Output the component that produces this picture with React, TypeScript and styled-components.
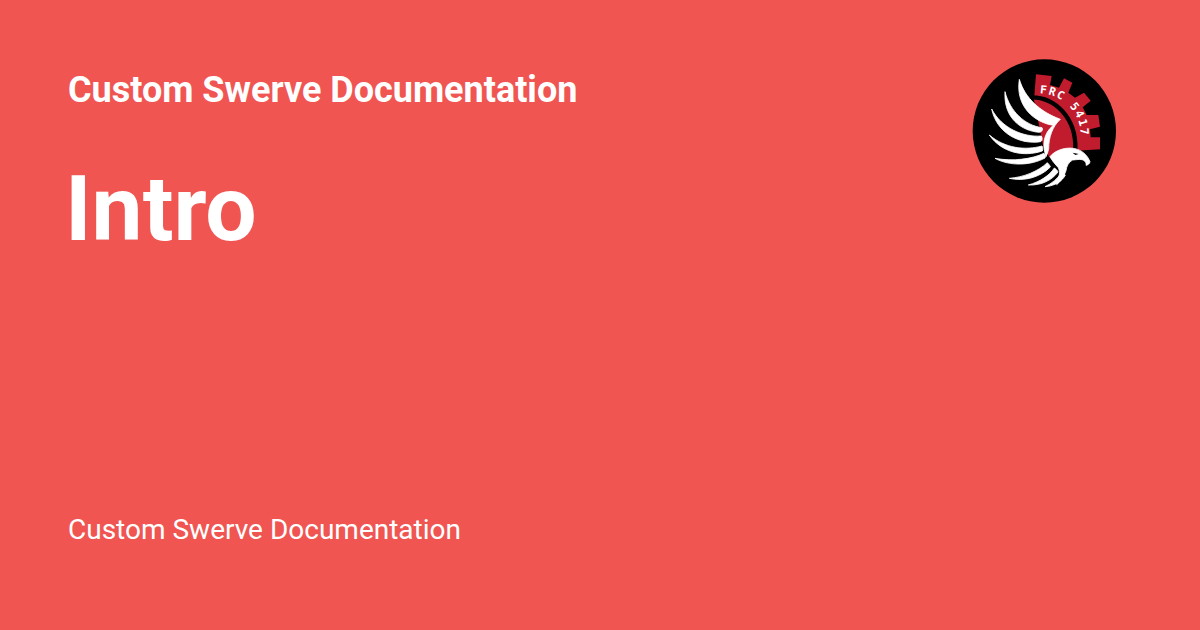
import React from 'react'
import styled, { createGlobalStyle } from 'styled-components'

const GlobalStyle = createGlobalStyle`
  html, body {
    margin: 0;
    padding: 0;
  }
`

const gear =
  'M228 73 L275 78 L270 105 L297 113 L312 85 L337 98 L325 128 L345 143 L372 128 L392 152 L368 172 L380 195 L415 195 L420 230 L390 238 L392 262 L420 262 L420 298 L350 302 L270 325 L250 290 L222 150 Z'

const feathers = [
  'M178 88 C195 145 240 185 301 208 C278 228 266 262 266 296 C264 305 262 312 258 320 C246 285 250 250 280 226 C225 218 165 170 178 88 Z',
  'M135 125 C150 185 195 226 246 233 C250 238 246 246 238 247 C185 243 130 205 135 125 Z',
  'M95 177 C125 235 190 262 244 258 C248 264 247 272 242 275 C180 285 110 250 95 177 Z',
  'M88 255 C135 295 195 302 246 288 C249 293 249 299 247 303 C190 322 125 308 88 255 Z',
  'M105 325 C160 335 215 327 252 310 C256 314 257 319 255 324 C215 346 150 350 105 325 Z',
  'M148 385 C190 382 235 364 262 338 C266 342 270 346 271 351 C240 383 190 395 148 385 Z',
  'M205 405 C240 395 268 377 283 354 C288 357 292 361 294 366 C276 390 245 407 205 405 Z',
  'M255 410 C276 400 292 387 304 368 L316 375 C308 392 286 408 255 410 Z',
]

const head =
  'M270 320 C285 300 320 290 345 296 C365 300 382 315 390 335 C389 342 383 345 378 346 C380 338 374 331 366 329 C355 327 345 330 338 330 C326 336 320 348 318 362 C312 380 302 394 290 404 C298 380 302 364 294 352 C286 343 276 332 270 320 Z'

const Logo = () => (
  <LogoSvg viewBox="36 27 432 432" aria-label="FRC 5417">
    <circle cx="253" cy="243" r="215" fill="#000" />
    <path d={gear} fill="#c01c2e" />
    <path d="M212 142 C285 140 350 205 346 300" fill="none" stroke="#000" strokeWidth="13" />
    <path id="gearText" d="M 239 130 A 125 125 0 0 1 362 262" fill="none" />
    <GearLabel textLength="195" lengthAdjust="spacing">
      <textPath href="#gearText">FRC 5417</textPath>
    </GearLabel>
    <g fill="#fff" stroke="#fff" strokeWidth="2.5" strokeLinejoin="round">
      {feathers.map(d => (
        <path key={d} d={d} />
      ))}
      <path d={head} />
    </g>
    <path d="M338 308 L356 312 L346 315 Z" fill="#000" />
  </LogoSvg>
)

const App = (): JSX.Element => (
  <>
    <GlobalStyle />
    <Card>
      <Header>
        <Headings>
          <Site>Custom Swerve Documentation</Site>
          <Title>Intro</Title>
        </Headings>
        <Logo />
      </Header>
      <Footer>Custom Swerve Documentation</Footer>
    </Card>
  </>
)

const Card = styled.div`
  box-sizing: border-box;
  width: 1200px;
  height: 630px;
  padding: 60px 84px 0 68px;
  display: flex;
  flex-direction: column;
  justify-content: space-between;
  background: #f05552;
  color: #fff;
  font-family: Roboto, 'Liberation Sans', sans-serif;
  overflow: hidden;
`

const Header = styled.div`
  display: flex;
  justify-content: space-between;
  align-items: flex-start;
`

const Headings = styled.div`
  display: flex;
  flex-direction: column;
  gap: 39px;
`

const Site = styled.div`
  font-size: 36px;
  font-weight: 700;
  line-height: 60px;
`

const Title = styled.div`
  font-size: 91px;
  font-weight: 700;
  line-height: 100px;
  margin-left: -3px;
`

const Footer = styled.div`
  font-size: 28px;
  line-height: 34px;
  margin-bottom: 83px;
`

const LogoSvg = styled.svg`
  width: 144px;
  height: 144px;
  display: block;
  margin-top: -1px;
`

const GearLabel = styled.text`
  fill: #fff;
  font-family: 'DejaVu Sans Mono', monospace;
  font-size: 34px;
  font-weight: 700;
`

export default App
